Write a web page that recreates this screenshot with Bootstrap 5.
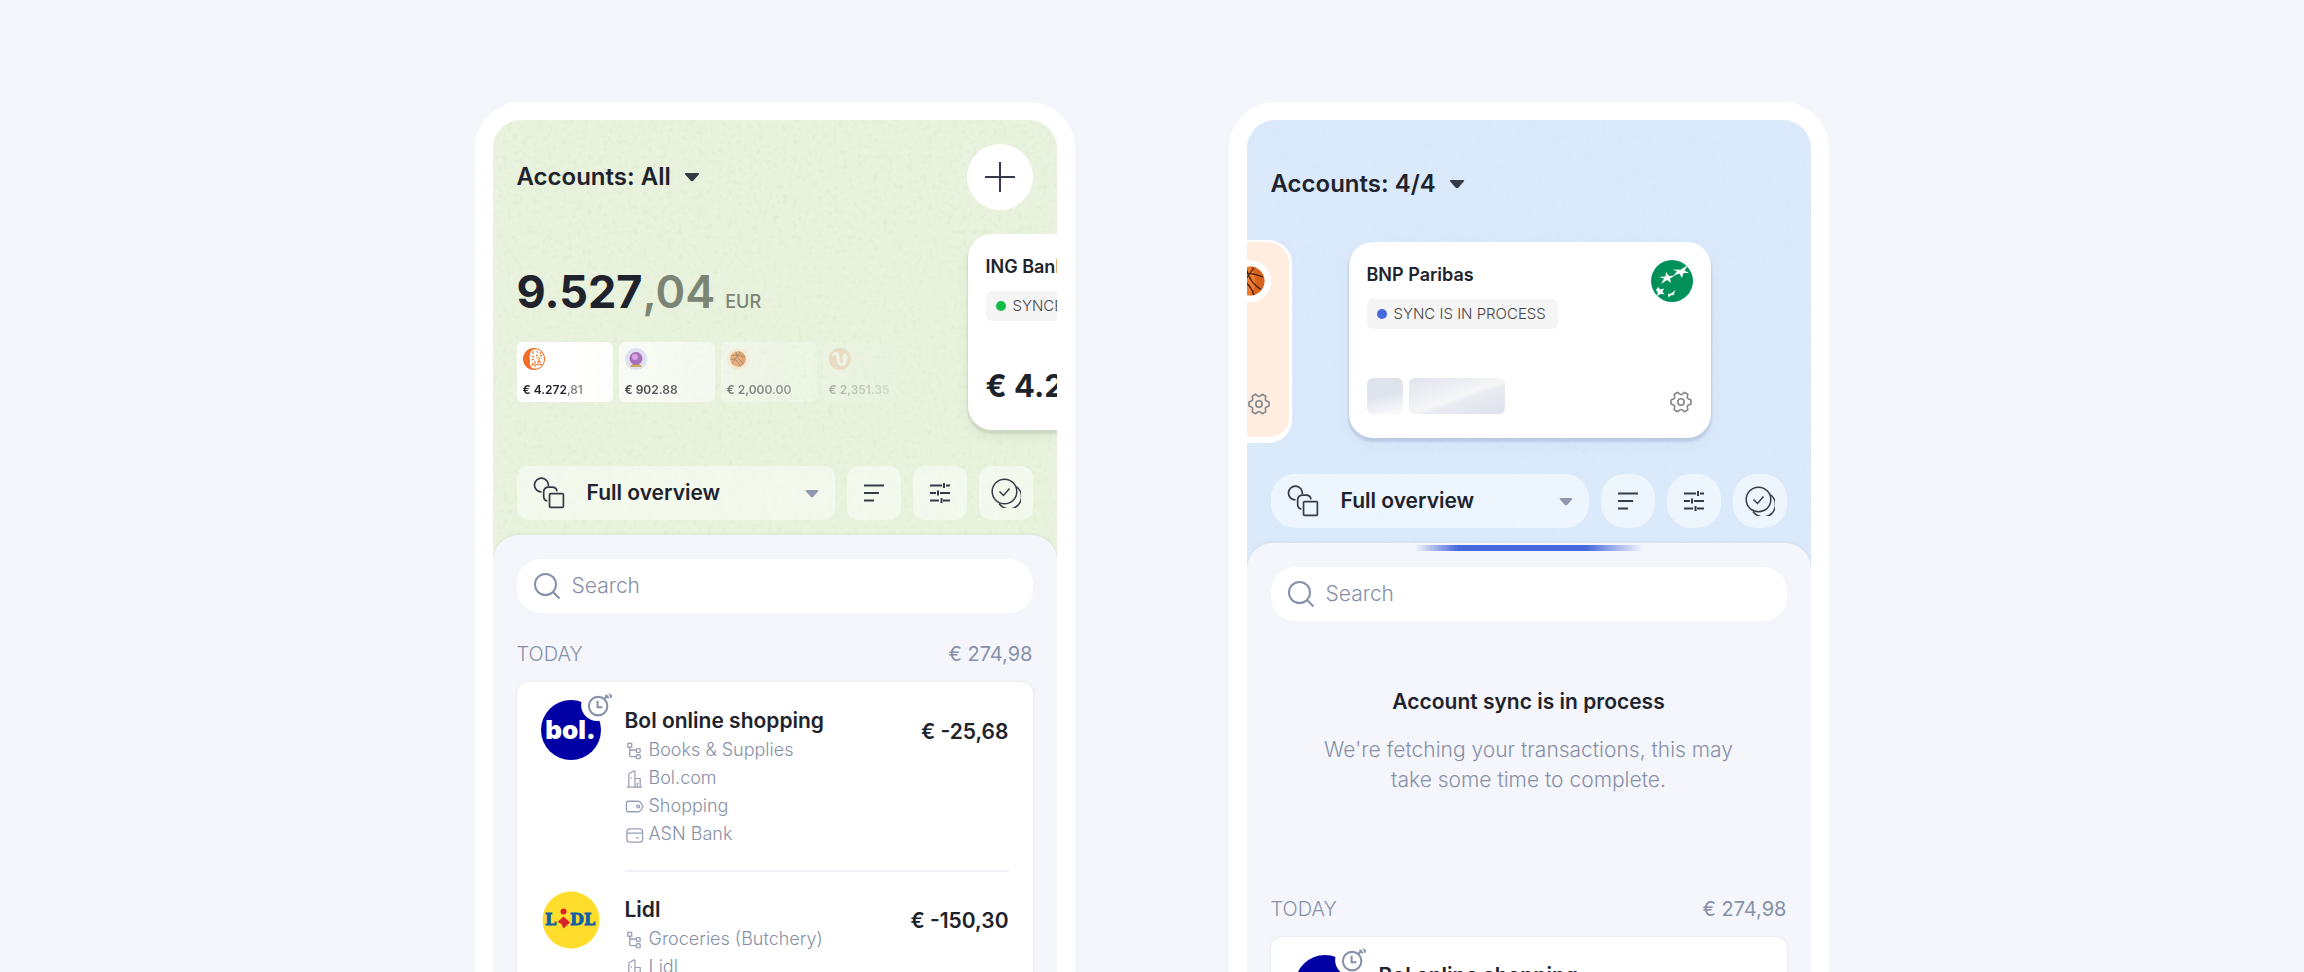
<!DOCTYPE html>
<html lang="en">
<head>
<meta charset="utf-8">
<meta name="viewport" content="width=device-width, initial-scale=1">
<title>Accounts overview</title>
<link href="https://cdn.jsdelivr.net/npm/bootstrap@5.3.0/dist/css/bootstrap.min.css" rel="stylesheet">
<style>
  :root { --ink:#20222c; --soft:#8790a8; --page:#f5f6fb; }
  body { font-family:Inter,"Open Sans",sans-serif; color:var(--ink); background:var(--page); }
  .stage { min-height:100vh; column-gap:154px; row-gap:48px; padding:102px 25px 0 24px; }
  .phone { flex:0 1 600px; min-width:0; background:#fff; border-radius:46px 46px 0 0; padding:18px 18px 0; }
  .screen { border-radius:28px 28px 0 0; overflow:hidden; min-height:100%; }
  .screen-green { background:#e8f2dd; }
  .screen-blue { background:#dbeafb; }
  .grain { inset:0; width:100%; height:100%; pointer-events:none; }
  .head { padding:24px 24px 15px; }
  .head-blue { padding-top:49px; }
  .tiny-svg { display:block; flex:none; }
  .picker { appearance:none; border:0; background:none; padding:0; color:var(--ink); font-size:24px; font-weight:600; line-height:30px; }
  .account { gap:12px; }
  .add { width:66px; height:66px; background:#fff; border:0; border-radius:50%; padding:0; }
  .slides { height:196px; margin:24px -24px 36px 0; }
  .balance { padding-top:30px; line-height:56px; font-size:45px; font-weight:700; white-space:nowrap; }
  .balance .cents { color:#7c8474; font-weight:600; }
  .balance .unit { color:#7c8474; font-size:18px; font-weight:500; margin-left:10px; }
  .minis { gap:6px; margin-top:22px; -webkit-mask-image:linear-gradient(90deg,#000 12%,rgba(0,0,0,.75) 35%,rgba(0,0,0,.5) 60%,rgba(0,0,0,.28) 80%,transparent); mask-image:linear-gradient(90deg,#000 12%,rgba(0,0,0,.75) 35%,rgba(0,0,0,.5) 60%,rgba(0,0,0,.28) 80%,transparent); }
  .mini { width:96px; height:60px; border-radius:6px; background:#fff; padding:6px 6px 4px; font-size:12px; line-height:16px; font-weight:600; white-space:nowrap; }
  .mini-2 { background:rgba(255,255,255,.85); }
  .mini-3 { background:rgba(255,255,255,.6); }
  .mini-4 { background:rgba(255,255,255,.5); }
  .mini .cents { color:#777; font-weight:500; }
  .bank { background:#fff; border-radius:24px; padding:18px; box-shadow:0 3px 2px 1px rgba(70,90,70,.13),0 6px 14px rgba(70,90,70,.06); }
  .bank-ing { width:89px; height:196px; border-radius:24px 0 0 24px; padding:18px 0 0 18px; overflow:hidden; white-space:nowrap; }
  .bank-name { font-size:18px; font-weight:600; line-height:30px; }
  .state { background:#f5f5f5; border-radius:6px; height:30px; line-height:30px; font-size:15px; font-weight:300; padding:0 12px 0 10px; margin-top:9px; color:#444; gap:7px; width:max-content; }
  .state i { width:10px; height:10px; border-radius:50%; background:#12bd4b; }
  .state .busy { background:#4768dc; }
  .bank-sum { font-size:31px; font-weight:700; line-height:40px; margin-top:45px; }
  .reel { height:203px; margin:41px -24px 31px; gap:57px; }
  .peach { flex:0 0 45px; height:203px; background:#ffeee0; border:solid #fff; border-width:2px 3px 6px 0; border-radius:0 24px 24px 0; overflow:hidden; padding:18px 18px 21px 0; }
  .bank-bnp { flex:0 1 362px; height:196px; margin-top:2px; padding:18px 18px 24px; box-shadow:0 3px 2px 1px rgba(60,90,130,.16),0 6px 14px rgba(60,90,130,.06); }
  .skeletons { gap:6px; }
  .skel { height:36px; width:36px; border-radius:6px; background:linear-gradient(165deg,#dfe3ec 45%,#f8f8fa 90%); }
  .skel-long { width:96px; background:linear-gradient(160deg,#dfe3ec,#f6f6f8 52%,#e9ebf1 60%,#dfe3ec 95%); }
  .tools { gap:12px; }
  .tile, .view { height:54px; border:0; border-radius:12px; background:rgba(255,255,255,.5); }
  .tile { width:54px; flex:none; padding:0; }
  .view { padding:0 16px; }
  .view .picker { font-size:21px; flex:1 1 auto; min-width:0; margin-left:22px; }
  .round .tile, .round .view { border-radius:24px; }
  .sheet { background:var(--page); border-radius:26px 26px 0 0; padding:24px 24px 0; min-height:437px; box-shadow:0 -1px 3px rgba(80,100,120,.08); }
  .finder { height:54px; border-radius:24px; background:#fff; padding:0 16px; gap:11px; }
  .finder input { border:0; outline:0; background:none; font-size:21px; font-weight:300; line-height:30px; min-width:0; flex:1; padding:0; color:var(--ink); }
  .finder input::placeholder { color:var(--soft); opacity:1; }
  .day { margin-top:28px; font-size:20px; font-weight:300; line-height:26px; color:var(--soft); }
  .day b { font-weight:400; }
  .ledger { background:#fff; margin-top:15px; border-radius:12px; padding:0 24px; box-shadow:0 0 3px rgba(90,100,130,.12); }
  .entry { gap:24px; }
  .brand { width:60px; height:60px; margin-top:18px; flex:none; }
  .disc { width:60px; height:60px; border-radius:50%; background:#0000a4; color:#fff; font-size:26px; font-weight:900; line-height:59px; text-align:center; }
  .clock { left:38px; top:-13px; }
  .body { padding:24px 0 22px; }
  .entry + .entry .body { border-top:2px solid #f1f2f6; padding-top:23px; }
  .entry + .entry .brand { margin-top:20px; }
  .entry h3, .notice h2 { font-size:21px; font-weight:600; line-height:30px; margin:0; }
  .cash { font-size:21px; font-weight:600; line-height:30px; margin-top:11px; white-space:nowrap; }
  .facts { font-size:18px; font-weight:300; line-height:28px; color:var(--soft); margin:0; }
  .facts li { gap:5px; }
  .notice { padding-top:66px; padding-bottom:73px; }
  .notice p { font-size:21px; font-weight:300; line-height:30px; color:var(--soft); margin:18px auto 0; max-width:440px; }
  .loading { height:6px; width:228px; top:2px; left:50%; margin-left:-114px; background:linear-gradient(90deg,rgba(71,104,220,0),#4768dc 19%,#4768dc 75%,rgba(71,104,220,0)); }
  @media (min-width:1400px) { .stage { height:100vh; overflow:hidden; } .phone { height:max-content; } }
</style>
</head>
<body>
<svg class="d-none" aria-hidden="true">
  <symbol id="caret" viewBox="0 0 16 10"><path d="M2 1h12q2 0 .8 1.600L9.500 8.600Q8 10 6.500 8.600L1.200 2.600Q0 1 2 1Z" fill="currentColor"/></symbol>
  <symbol id="shapes" viewBox="0 0 30 30"><g fill="none" stroke="#353a48" stroke-width="1.600"><path d="M8 14A6.500 6.500 0 1 1 14.300 8.500"/><path d="M13.500 22.500Q10 22 10 18v-4q0-4.500 5-4.500h3q4 0 4.500 4"/><rect x="15.500" y="15.500" width="13" height="13" rx="1"/></g></symbol>
  <symbol id="bars" viewBox="0 0 24 24"><path d="M2 4.500h20M2 12h15M2 19.500h10" stroke="#353a48" stroke-width="2" fill="none"/></symbol>
  <symbol id="sliders" viewBox="0 0 24 24"><path d="M2 4.500h12M18 4.500h4M16 2v5M2 12h6M12 12h10M10 9.500v5M2 19.500h9M15 19.500h7M13.500 17v5" stroke="#353a48" stroke-width="2" fill="none"/></symbol>
  <symbol id="coins" viewBox="0 0 30 30"><g fill="none" stroke="#353a48" stroke-width="1.500"><circle cx="13.500" cy="13.500" r="12.300"/><path d="M25.200 8.500A12.300 12.300 0 1 1 8 25.500"/><path d="m8.500 13.500 4 4 6-7"/></g></symbol>
  <symbol id="lens" viewBox="0 0 28 28"><g fill="none" stroke="#8591a9" stroke-width="2"><circle cx="12.500" cy="12.500" r="10.500"/><path d="m20 20 6.500 6.500"/></g></symbol>
  <symbol id="tree" viewBox="0 0 20 20"><g fill="none" stroke="#98a0b5" stroke-width="1.400"><rect x="3" y="2.500" width="4" height="4"/><path d="M5 6.500v8.500q0 1.500 1.500 1.500H12M5 9.500h7"/><rect x="12" y="8" width="4" height="4" rx="1"/><rect x="12" y="14.500" width="4" height="4" rx="1"/></g></symbol>
  <symbol id="building" viewBox="0 0 20 20"><g fill="none" stroke="#98a0b5" stroke-width="1.300"><path d="M4 19V6q0-1 1-1.500L9.500 2q1-.4 1 .8V19M10.500 10H16v9M2 19h16M6 9.500h1.500M13 19v-4h1.500"/></g></symbol>
  <symbol id="tag" viewBox="0 0 20 20"><g fill="none" stroke="#98a0b5" stroke-width="1.400"><path d="M3.500 4.500H14q1.500 0 2.500 1.500l2 3q.8 1 0 2l-2 3Q15.500 15.500 14 15.500H3.500Q1.500 15.500 1.500 13.500V6.500q0-2 2-2Z"/><circle cx="14" cy="10" r="1.500"/></g></symbol>
  <symbol id="cardicon" viewBox="0 0 20 20"><g fill="none" stroke="#98a0b5" stroke-width="1.400"><rect x="2" y="4" width="16.500" height="14" rx="3"/><path d="M2 8.500h16.500M11.500 13.500h3"/></g></symbol>
  <symbol id="gear" viewBox="0 0 24 24"><g fill="none" stroke="#84858a" stroke-width="1.600" stroke-linejoin="round"><path d="M22 10v4l-2.400 1q-1.600.5-1.300 1.900l.5 2.900-3.500 1.900-2.200-1.800q-1.100-.8-2.200 0L8.700 21.700l-3.500-1.900.5-2.900q.3-1.400-1.300-1.900L2 14v-4l2.400-1q1.600-.5 1.300-1.900l-.5-2.900 3.500-1.900 2.200 1.800q1.100.8 2.200 0l2.200-1.800 3.500 1.900-.5 2.900q-.3 1.400 1.300 1.900Z"/><circle cx="12" cy="12" r="3.200"/></g></symbol>
  <symbol id="ball" viewBox="0 0 30 30"><circle cx="15" cy="15" r="14.500" fill="#ef7a2e"/><path d="M15 .5A14.500 14.500 0 0 1 15 29.500 23 23 0 0 0 15 .5" fill="#c65412" opacity=".6"/><g fill="none" stroke="#3b1d10" stroke-width="1.200"><path d="M2 9Q12 5 28 11M11 1.500Q14 16 26 23.500M1 16Q13 12 19 29M19 1.500Q12 11 4 24"/></g></symbol>
  <symbol id="stopwatch" viewBox="0 0 32 32"><circle cx="17" cy="17" r="15" fill="#fff"/><g fill="none" stroke="#8591a9" stroke-width="1.900"><circle cx="18" cy="18" r="8.700"/><path d="M17.500 13v6h4.500M24 11l3-3M25 7.500l3 3M28 7h1M30 7v3"/></g></symbol>
  <symbol id="lidl" viewBox="0 0 60 60"><circle cx="30" cy="30" r="28.500" fill="#ffdd2d"/><g font-family="DejaVu Serif,serif" font-weight="700" font-size="16" fill="#0f5fa8" stroke="#0f5fa8" stroke-width=".8"><text x="4" y="35">L</text><text x="29" y="35">DL</text></g><circle cx="22.500" cy="21.500" r="3" fill="#d8232a"/><path d="m16.500 32 6-5.500 6.500 6-6.500 6-2-4.500Z" fill="#d8232a"/></symbol>
  <symbol id="lion" viewBox="0 0 22 22"><circle cx="11" cy="11" r="11" fill="#f26c25"/><path d="M8 3q3-2.500 7-1.500 6 3 6 9.500 0 6-5 9-4 1.500-7 0Q6 17 7 13 6 7 8 3Z" fill="#fff"/><g fill="none" stroke="#f26c25" stroke-width="1.100"><path d="M10 3v3M9 8l2 1M9 12l2-1M10 15l-1 3M13 7l2 1M17 8l2-1M16 9v4l-1 1h3M13 10h1M18 10h1M13 17l3-1 3 1M14 3l1 2M18 4l-1 2M12 13v6"/></g></symbol>
  <symbol id="orb" viewBox="0 0 22 22"><circle cx="11" cy="11" r="11" fill="#dedcf5"/><path d="M7 16h8l2 3H5Z" fill="#c59a3c"/><circle cx="11" cy="10.500" r="6.500" fill="#9a4db4"/><circle cx="10" cy="9" r="3" fill="#d394e2"/></symbol>
  <symbol id="squirrel" viewBox="0 0 22 22"><circle cx="11" cy="11" r="11" fill="#efa27d"/><path d="M3 9Q3 4 7 4t3.500 5q0 5 2 6 3-1 1-4 0-4 3-6 1 3 3 4-2 2-2 5-1 4-5 4-5-1-5-7 0-4-1.500-4T3 9Z" fill="#fff"/></symbol>
  <symbol id="bnp" viewBox="0 0 42 42"><circle cx="21" cy="21" r="21" fill="#00915a"/><g fill="#fff"><path d="m22 9.500 7.500.2L37 5l-3.500 5.500L38 13l-5.500 0L31 18l-2.500-4.500L22 16l4-4.500Z"/><path d="m8 17 6.500-.5L15 12l3 4 6-.5-5 3L20 23l-4-3-6 4 3-5.500Z"/><path d="m7 27 2.500 2.500 3.500-1-1.500 3.200 2 2.800-3.500-.8L6 36l.8-3.500L5 30Z"/><path d="m17 34 3-.5 4.500-3.500-1.500 3.500.5 1.500-3.500.2L17.500 37.500Z"/></g></symbol>
  <symbol id="plus" viewBox="0 0 32 32"><path d="M16 1v30M1 16h30" stroke="#353a48" stroke-width="2" fill="none"/></symbol>
  <filter id="speck-green" x="0" y="0" width="100%" height="100%"><feTurbulence type="fractalNoise" baseFrequency=".2" numOctaves="2" seed="4"/><feColorMatrix values="0 0 0 0 .72  0 0 0 0 .82  0 0 0 0 .6  3 0 0 0 -1.600"/></filter>
  <filter id="speck-blue" x="0" y="0" width="100%" height="100%"><feTurbulence type="fractalNoise" baseFrequency=".2" numOctaves="2" seed="9"/><feColorMatrix values="0 0 0 0 .66  0 0 0 0 .76  0 0 0 0 .88  3 0 0 0 -1.600"/></filter>
</svg>

<main class="stage d-flex flex-wrap flex-xl-nowrap justify-content-center align-items-start">
  <section class="phone" aria-label="All accounts">
    <div class="screen screen-green position-relative">
      <svg class="grain position-absolute" opacity=".14" aria-hidden="true"><rect width="100%" height="100%" filter="url(#speck-green)"/></svg>
      <header class="head position-relative">
        <div class="d-flex justify-content-between align-items-center">
          <label class="account d-flex align-items-center"><select class="picker" aria-label="Accounts"><option>Accounts: All</option></select><svg class="tiny-svg" width="16" height="10" color="#353a48"><use href="#caret"/></svg></label>
          <button class="add d-flex align-items-center justify-content-center" type="button" aria-label="Add account"><svg width="32" height="32"><use href="#plus"/></svg></button>
        </div>
        <div class="slides d-flex justify-content-between align-items-start">
          <div>
            <div class="balance lh-sm">9.527<span class="cents">,04</span><span class="unit">EUR</span></div>
            <div class="minis d-flex">
              <div class="mini d-flex flex-column justify-content-between"><svg class="tiny-svg" width="22" height="22"><use href="#lion"/></svg><div>€ 4.272<span class="cents">,81</span></div></div>
              <div class="mini mini-2 d-flex flex-column justify-content-between"><svg class="tiny-svg" width="22" height="22"><use href="#orb"/></svg><div>€ 902.88</div></div>
              <div class="mini mini-3 d-flex flex-column justify-content-between"><svg class="tiny-svg" width="22" height="22" viewBox="0 0 22 22"><circle cx="11" cy="11" r="11" fill="#ffe6d3"/><use href="#ball" x="3" y="3" width="16" height="16"/></svg><div>€ 2,000.00</div></div>
              <div class="mini mini-4 d-flex flex-column justify-content-between"><svg class="tiny-svg" width="22" height="22"><use href="#squirrel"/></svg><div>€ 2,351.35</div></div>
            </div>
          </div>
          <article class="bank bank-ing">
            <div class="bank-name">ING Bank</div>
            <div class="state d-flex align-items-center"><i></i>SYNCED</div>
            <div class="bank-sum">€ 4.272</div>
          </article>
        </div>
        <div class="tools d-flex">
          <label class="view d-flex align-items-center flex-grow-1"><svg class="tiny-svg" width="32" height="32"><use href="#shapes"/></svg><select class="picker" aria-label="View"><option>Full overview</option></select><svg class="tiny-svg" width="14" height="9" color="#8f98ae"><use href="#caret"/></svg></label>
          <button class="tile d-flex align-items-center justify-content-center" type="button" aria-label="Sort"><svg width="24" height="24"><use href="#bars"/></svg></button>
          <button class="tile d-flex align-items-center justify-content-center" type="button" aria-label="Filter"><svg width="24" height="24"><use href="#sliders"/></svg></button>
          <button class="tile d-flex align-items-center justify-content-center" type="button" aria-label="Select"><svg width="30" height="30"><use href="#coins"/></svg></button>
        </div>
      </header>
      <div class="sheet position-relative">
        <label class="finder d-flex align-items-center"><svg class="tiny-svg" width="28" height="28"><use href="#lens"/></svg><input type="search" placeholder="Search" aria-label="Search"></label>
        <div class="day d-flex justify-content-between"><span>TODAY</span><b>€ 274,98</b></div>
        <div class="ledger">
          <article class="entry d-flex">
            <div class="brand position-relative"><div class="disc">bol.</div><svg class="clock position-absolute" width="34" height="34"><use href="#stopwatch"/></svg></div>
            <div class="body d-flex flex-grow-1 justify-content-between align-items-start">
              <div><h3>Bol online shopping</h3>
                <ul class="facts list-unstyled">
                  <li class="d-flex align-items-center"><svg width="19" height="19"><use href="#tree"/></svg>Books &amp; Supplies</li>
                  <li class="d-flex align-items-center"><svg width="19" height="19"><use href="#building"/></svg>Bol.com</li>
                  <li class="d-flex align-items-center"><svg width="19" height="19"><use href="#tag"/></svg>Shopping</li>
                  <li class="d-flex align-items-center"><svg width="19" height="19"><use href="#cardicon"/></svg>ASN Bank</li>
                </ul></div>
              <div class="cash">€ -25,68</div>
            </div>
          </article>
          <article class="entry d-flex">
            <div class="brand"><svg width="60" height="60"><use href="#lidl"/></svg></div>
            <div class="body d-flex flex-grow-1 justify-content-between align-items-start">
              <div><h3>Lidl</h3>
                <ul class="facts list-unstyled">
                  <li class="d-flex align-items-center"><svg width="19" height="19"><use href="#tree"/></svg>Groceries (Butchery)</li>
                  <li class="d-flex align-items-center"><svg width="19" height="19"><use href="#building"/></svg>Lidl</li>
                </ul></div>
              <div class="cash">€ -150,30</div>
            </div>
          </article>
        </div>
      </div>
    </div>
  </section>

  <section class="phone" aria-label="BNP Paribas account">
    <div class="screen screen-blue position-relative">
      <svg class="grain position-absolute" opacity=".06" aria-hidden="true"><rect width="100%" height="100%" filter="url(#speck-blue)"/></svg>
      <header class="head head-blue position-relative">
        <div class="d-flex">
          <label class="account d-flex align-items-center"><select class="picker" aria-label="Accounts"><option>Accounts: 4/4</option></select><svg class="tiny-svg" width="16" height="10" color="#353a48"><use href="#caret"/></svg></label>
        </div>
        <div class="reel d-flex align-items-start">
          <div class="peach d-flex flex-column justify-content-between align-items-end">
            <svg class="tiny-svg" width="42" height="42" viewBox="0 0 42 42"><circle cx="21" cy="21" r="21" fill="#fff"/><use href="#ball" x="6" y="6" width="30" height="30"/></svg>
            <svg class="tiny-svg" width="24" height="24"><use href="#gear"/></svg>
          </div>
          <article class="bank bank-bnp d-flex flex-column justify-content-between">
            <div class="d-flex justify-content-between align-items-start">
              <div><div class="bank-name">BNP Paribas</div><div class="state d-flex align-items-center"><i class="busy"></i>SYNC IS IN PROCESS</div></div>
              <svg class="tiny-svg" width="42" height="42"><use href="#bnp"/></svg>
            </div>
            <div class="d-flex justify-content-between align-items-end">
              <div class="skeletons d-flex"><div class="skel"></div><div class="skel skel-long"></div></div>
              <svg class="tiny-svg" width="24" height="24"><use href="#gear"/></svg>
            </div>
          </article>
        </div>
        <div class="tools round d-flex">
          <label class="view d-flex align-items-center flex-grow-1"><svg class="tiny-svg" width="32" height="32"><use href="#shapes"/></svg><select class="picker" aria-label="View"><option>Full overview</option></select><svg class="tiny-svg" width="14" height="9" color="#8f98ae"><use href="#caret"/></svg></label>
          <button class="tile d-flex align-items-center justify-content-center" type="button" aria-label="Sort"><svg width="24" height="24"><use href="#bars"/></svg></button>
          <button class="tile d-flex align-items-center justify-content-center" type="button" aria-label="Filter"><svg width="24" height="24"><use href="#sliders"/></svg></button>
          <button class="tile d-flex align-items-center justify-content-center" type="button" aria-label="Select"><svg width="30" height="30"><use href="#coins"/></svg></button>
        </div>
      </header>
      <div class="sheet position-relative">
        <div class="loading position-absolute" role="progressbar" aria-label="Syncing"></div>
        <label class="finder d-flex align-items-center"><svg class="tiny-svg" width="28" height="28"><use href="#lens"/></svg><input type="search" placeholder="Search" aria-label="Search"></label>
        <div class="notice text-center"><h2>Account sync is in process</h2><p>We're fetching your transactions, this may take some time to complete.</p></div>
        <div class="day d-flex justify-content-between"><span>TODAY</span><b>€ 274,98</b></div>
        <div class="ledger">
          <article class="entry d-flex">
            <div class="brand position-relative"><div class="disc">bol.</div><svg class="clock position-absolute" width="34" height="34"><use href="#stopwatch"/></svg></div>
            <div class="body d-flex flex-grow-1 justify-content-between align-items-start"><h3>Bol online shopping</h3><div class="cash">€ -25,68</div></div>
          </article>
        </div>
      </div>
    </div>
  </section>
</main>
<script src="https://cdn.jsdelivr.net/npm/bootstrap@5.3.0/dist/js/bootstrap.bundle.min.js"></script>
</body>
</html>
